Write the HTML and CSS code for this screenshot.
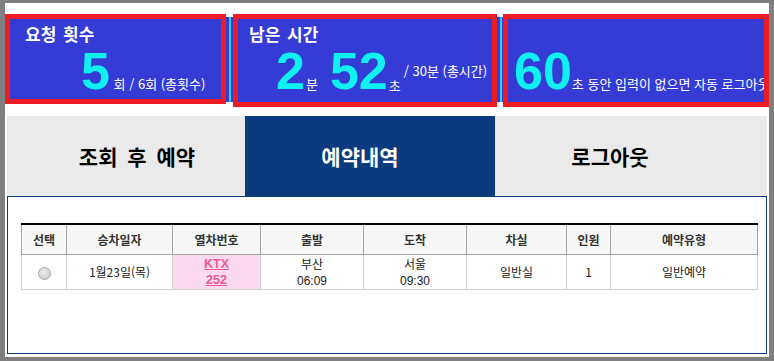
FILE: index.html
```html
<!DOCTYPE html>
<html lang="ko">
<head>
  <meta charset="UTF-8">
  <title>예약내역</title>
  <link rel="stylesheet" href="styles.css">
</head>
<body>
  <div class="stats">
    <div class="stat stat-req">
      <div class="stat-label">요청 횟수</div>
      <div class="num-row">
        <span class="big">5</span><span class="small"> 회 / 6회 (총횟수)</span>
      </div>
    </div>
    <div class="stat-sep"></div>
    <div class="stat stat-time">
      <div class="stat-label">남은 시간</div>
      <div class="num-row">
        <span class="big">2</span><span class="unit">분</span><span class="big big-gap">52</span><span class="unit unit-low">초</span><span class="small sup">/ 30분 (총시간)</span>
      </div>
    </div>
    <div class="stat-sep stat-sep-narrow"></div>
    <div class="stat stat-idle">
      <div class="num-row">
        <span class="big">60</span><span class="small">초 동안 입력이 없으면 자동 로그아웃</span>
      </div>
    </div>
  </div>

  <div class="tabs">
    <div class="tab tab-search">조회 후 예약</div>
    <div class="tab tab-list active">예약내역</div>
    <div class="tab tab-logout">로그아웃</div>
  </div>

  <div class="panel">
    <table class="rsv">
      <colgroup>
        <col class="c-sel"><col class="c-date"><col class="c-train"><col class="c-dep">
        <col class="c-arr"><col class="c-car"><col class="c-cnt"><col class="c-type">
      </colgroup>
      <tr>
        <th>선택</th><th>승차일자</th><th>열차번호</th><th>출발</th>
        <th>도착</th><th>차실</th><th>인원</th><th>예약유형</th>
      </tr>
      <tr>
        <td><span class="radio"></span></td>
        <td>1월23일(목)</td>
        <td class="train"><a href="#">KTX<br>252</a></td>
        <td>부산<br><span class="time">06:09</span></td>
        <td>서울<br><span class="time">09:30</span></td>
        <td>일반실</td>
        <td>1</td>
        <td>일반예약</td>
      </tr>
    </table>
  </div>
</body>
</html>
```

FILE: styles.css
```css
html { background: #808080; }
body { margin: 3px 5px 4px; height: 354px; padding-top: 11px; box-sizing: border-box; background: #fff; overflow: hidden; font-family: "Noto Sans CJK KR", "Liberation Sans", sans-serif; color: #222; }

.stats { display: flex; align-items: flex-start; }
.stat { box-sizing: border-box; height: 93px; border: 5px solid #ed1c24; background: #353cd6; color: #fff; padding-top: 3px; overflow: hidden; white-space: nowrap; }
.stat-req { width: 221px; height: 90px; padding-left: 15px; }
.stat-time { width: 264px; padding-left: 11px; }
.stat-idle { width: 266px; padding-left: 6px; padding-top: 27px; }
.stat-sep { width: 7px; height: 85px; margin-top: 3px; background: linear-gradient(to right, #353cd6 3px, #2fd0f5 3px, #2fd0f5 5px, #353cd6 5px); }
.stat-sep-narrow { width: 6px; }
.stat-label { font-size: 17px; font-weight: bold; line-height: 24px; word-spacing: 2px; }
.num-row { line-height: 50px; height: 50px; }
.stat-req .num-row { padding-left: 56px; }
.stat-time .num-row { padding-left: 27px; }
.big { font-family: "Liberation Sans", Arial, sans-serif; font-weight: bold; font-size: 52px; color: #0ff0f0; }
.big-gap { margin-left: 12px; }
.small { font-size: 13px; line-height: 1; }
.unit { font-size: 13px; line-height: 1; margin-left: 1px; }
.unit-low { vertical-align: -2px; }
.sup { vertical-align: 13px; margin-left: 3px; }

.tabs { display: flex; margin: 9px 2px 0; height: 80px; }
.tab { display: flex; align-items: center; justify-content: center; box-sizing: border-box; background: #eaeaea; color: #000; font-size: 21px; font-weight: bold; word-spacing: 4px; }
.tab.active { background: #0b3a7e; color: #fff; }
.tab-search { width: 238px; padding-left: 22px; }
.tab-list { width: 250px; padding-right: 20px; }
.tab-logout { width: 272px; padding-right: 42px; }

.panel { margin: 0 2px; height: 158px; box-sizing: border-box; border: 1px solid #0b3a7e; padding: 26px 8px 0 13px; }
.rsv { width: 736px; border-collapse: collapse; table-layout: fixed; font-size: 12px; border-top: 2px solid #000; }
.c-sel { width: 45px; }
.c-date { width: 106px; }
.c-train { width: 88px; }
.c-dep { width: 103px; }
.c-arr { width: 103px; }
.c-car { width: 100px; }
.c-cnt { width: 44px; }
.c-type { width: 147px; }
th { height: 29px; padding: 0; background: #f7f7f7; border: 1px solid #a5a5a5; border-top: 0; color: #333; font-weight: bold; }
td { height: 34px; padding: 0; border: 1px solid #cfcfcf; text-align: center; line-height: 16px; color: #222; }
td .time { font-family: "Liberation Sans", Arial, sans-serif; }
td.train { background: #fbd9f0; font-family: "Liberation Sans", Arial, sans-serif; }
td.train a { color: #ee5a92; font-weight: bold; font-size: 12.5px; }
.radio { display: inline-block; width: 11px; height: 11px; border: 1px solid #a9a9a9; border-radius: 50%; background: radial-gradient(circle at 45% 40%, #eeeeee, #c4c4c4); vertical-align: middle; }
```
